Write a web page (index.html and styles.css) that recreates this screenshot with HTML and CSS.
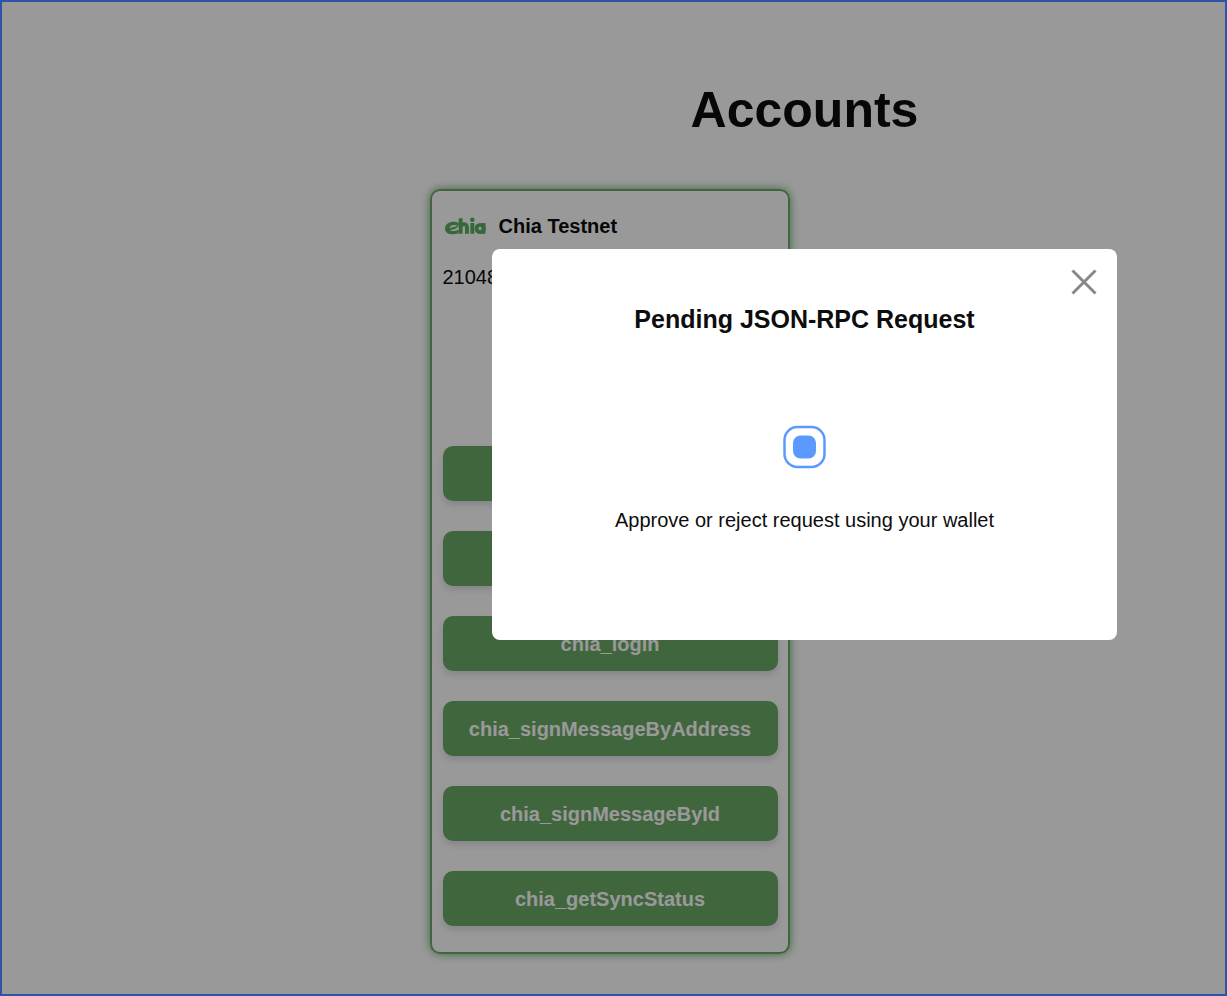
FILE: index.html
```html
<!DOCTYPE html>
<html lang="en">
<head>
<meta charset="utf-8">
<title>Accounts</title>
<link rel="stylesheet" href="styles.css">
</head>
<body>
<main class="page">
  <h1 class="page-title">Accounts</h1>
  <div class="accounts">
    <section class="card">
      <header class="card-head">
        <svg class="logo" viewBox="0 0 42 18" fill="none" stroke="currentColor" stroke-width="4" aria-hidden="true">
          <path d="M14 6C9 3 0 5 0 11.500C0 18 8 18.500 14 16.500V13C10 14.500 6.500 14.500 5 13C10 13 13 11 14 8C11 10 8 10.500 4.500 11C5.500 8 9 7 14 9Z" fill="currentColor" stroke="none"/>
          <path d="M16 1V17M16 10.500C16.500 6 22.500 6 22.500 10.500V17M28 6V17"/>
          <path d="M39.500 6V17"/>
          <ellipse cx="36" cy="11.500" rx="3.700" ry="3.700"/>
          <circle cx="28" cy="2.600" r="2.300" fill="currentColor" stroke="none"/>
        </svg>
        <h2 class="card-title">Chia Testnet</h2>
      </header>
      <p class="address">21048</p>
      <div class="methods">
        <button class="method" type="button" aria-label="Method 1"></button>
        <button class="method" type="button" aria-label="Method 2"></button>
        <button class="method" type="button">chia_login</button>
        <button class="method" type="button">chia_signMessageByAddress</button>
        <button class="method" type="button">chia_signMessageById</button>
        <button class="method" type="button">chia_getSyncStatus</button>
      </div>
    </section>
  </div>
</main>
<div class="overlay">
  <div class="modal" role="dialog" aria-modal="true" aria-labelledby="modal-title">
    <button class="close" type="button" aria-label="Close">
      <svg viewBox="0 0 26 26" width="26" height="26" stroke="currentColor" stroke-width="3"><path d="M1.500 1.500L24.500 24.500M24.500 1.500L1.500 24.500"/></svg>
    </button>
    <h2 class="modal-title" id="modal-title">Pending JSON-RPC Request</h2>
    <svg class="loader" viewBox="0 0 44 44" aria-hidden="true">
      <rect x="2.500" y="2" width="40" height="40" rx="13" fill="none" stroke="currentColor" stroke-width="2.500"/>
      <rect x="11" y="10.500" width="23" height="23" rx="7.500" fill="currentColor"/>
    </svg>
    <p class="modal-text">Approve or reject request using your wallet</p>
  </div>
</div>
<div class="frame"></div>
</body>
</html>
```
FILE: styles.css
```css
* {
  box-sizing: border-box;
}

body {
  margin: 0;
  background: #fff;
  color: #0d0d0d;
  font: 20px/24px "Liberation Sans", Arial, sans-serif;
}

h1, h2, p {
  margin: 0;
}

.page {
  min-height: 100vh;
  padding: 80px 0 40px 382px;
}

.page-title {
  font-size: 50px;
  line-height: 60px;
  text-align: center;
}

.accounts {
  display: grid;
  grid-template-columns: 1fr 1fr;
  max-width: 780px;
  margin: 49px auto 0;
}

.card {
  margin: 0 15px;
  padding: 22px 10px 26px 11px;
  border: 2px solid #6caa67;
  border-radius: 10px;
  box-shadow: 0 0 10px #6caa67;
}

.card-head {
  display: flex;
  align-items: center;
  gap: 13px;
  padding-left: 2px;
}

.logo {
  width: 41px;
  height: 18px;
  color: #5cad60;
}

.card-title {
  font-size: 20px;
  line-height: 26px;
}

.address {
  margin-top: 26px;
}

.methods {
  display: grid;
  gap: 30px;
  margin-top: 157px;
}

.method {
  height: 55px;
  padding: 0;
  border: 0;
  border-radius: 10px;
  background: #6caa67;
  color: #fff;
  font: bold 20px/24px "Liberation Sans", Arial, sans-serif;
  box-shadow: 0 4px 6px rgba(50, 50, 93, 0.15);
}

.overlay {
  position: fixed;
  inset: 0;
  display: flex;
  align-items: flex-start;
  justify-content: center;
  padding: 249px 0 0 382px;
  background: rgba(0, 0, 0, 0.4);
}

.modal {
  position: relative;
  display: flex;
  flex-direction: column;
  align-items: center;
  width: 74%;
  padding: 55px 30px 108px;
  border-radius: 8px;
  background: #fff;
}

.close {
  position: absolute;
  top: 20px;
  right: 20px;
  padding: 0;
  border: 0;
  background: none;
  color: #888;
  line-height: 0;
}

.modal-title {
  font-size: 25px;
  line-height: 30px;
}

.loader {
  width: 44px;
  height: 44px;
  margin: 91px 0 39px;
  color: #5c99ff;
}

.frame {
  position: fixed;
  inset: 0;
  border: 2px solid #3054a5;
  pointer-events: none;
}
```
